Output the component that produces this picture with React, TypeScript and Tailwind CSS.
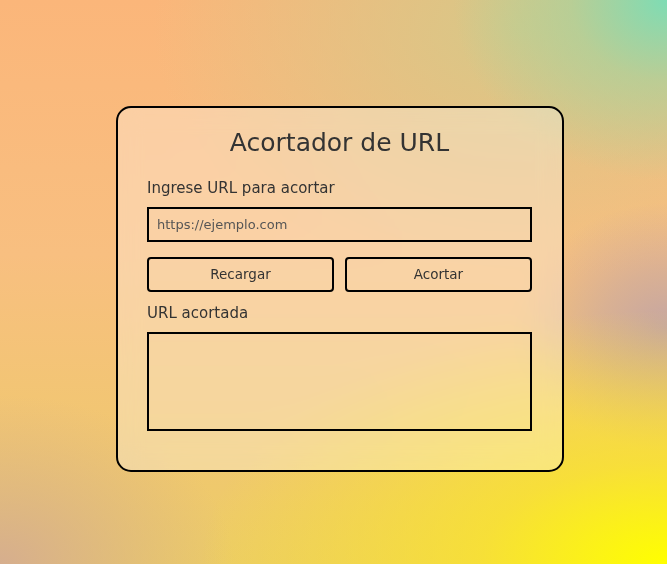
export default function App() {
  return (
    <div className="h-[564px] w-full overflow-hidden bg-[radial-gradient(ellipse_32%_32%_at_100%_0%,#7edcb4_0%,rgba(160,212,160,0.6)_45%,rgba(200,200,140,0)_100%),radial-gradient(ellipse_70%_45%_at_100%_100%,#ffff00_0%,rgba(250,230,40,0.75)_40%,rgba(240,210,80,0)_100%),radial-gradient(ellipse_22%_22%_at_100%_58%,#c6a6a2_0%,rgba(198,166,162,0.6)_45%,rgba(198,166,162,0)_100%),radial-gradient(ellipse_35%_30%_at_0%_100%,#d6ae8e_0%,rgba(214,174,142,0)_100%),radial-gradient(ellipse_55%_45%_at_78%_5%,#d6c888_0%,rgba(214,200,136,0.5)_50%,rgba(214,200,136,0)_100%),linear-gradient(to_bottom,#fbb67a_0%,#f8bf80_45%,#eccc66_100%)] pl-[116px] pt-[106px] font-['DejaVu_Sans',sans-serif]">
      <div className="flex w-[448px] flex-col rounded-[15px] border-2 border-black bg-white/30 pb-[39px] pl-[29px] pr-[30px] pt-[20px] backdrop-blur-md">
        <h1 className="text-center text-[25px] leading-[30px] text-[#333]">
          Acortador de URL
        </h1>
        <label className="mt-[20px] text-[15px] leading-[20px] text-[#333]">
          Ingrese URL para acortar
        </label>
        <input
          type="text"
          placeholder="https://ejemplo.com"
          className="mt-[9px] h-[35px] border-2 border-black bg-transparent pl-[8px] text-[13px] text-[#333] outline-none placeholder:text-[#555]"
        />
        <div className="mt-[15px] flex gap-[11px]">
          <button className="h-[35px] flex-1 rounded-[4px] border-2 border-black bg-transparent text-[13.5px] text-[#333]">
            Recargar
          </button>
          <button className="h-[35px] flex-1 rounded-[4px] border-2 border-black bg-transparent text-[13.5px] text-[#333]">
            Acortar
          </button>
        </div>
        <label className="mt-[11px] text-[15px] leading-[20px] text-[#333]">
          URL acortada
        </label>
        <textarea className="mt-[9px] h-[99px] resize-none border-2 border-black bg-transparent outline-none" />
      </div>
    </div>
  );
}
